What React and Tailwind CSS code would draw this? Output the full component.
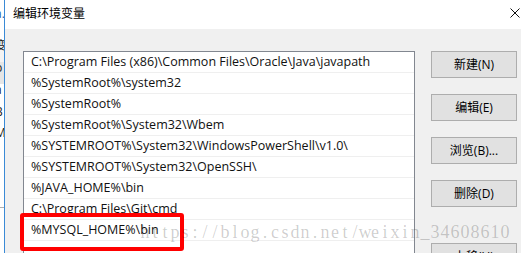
import React from "react";

const rows = [
  "C:\\Program Files (x86)\\Common Files\\Oracle\\Java\\javapath",
  "%SystemRoot%\\system32",
  "%SystemRoot%",
  "%SystemRoot%\\System32\\Wbem",
  "%SYSTEMROOT%\\System32\\WindowsPowerShell\\v1.0\\",
  "%SYSTEMROOT%\\System32\\OpenSSH\\",
  "%JAVA_HOME%\\bin",
  "C:\\Program Files\\Git\\cmd",
  "%MYSQL_HOME%\\bin",
  "",
];

const watermark = "https://blog.csdn.net/weixin_34608610";

function Btn({ children, className = "" }) {
  return (
    <div
      className={
        "w-[86px] h-[27px] shrink-0 flex items-center justify-center border border-[#adadad] bg-[#e1e1e1] text-[12px] text-black " +
        className
      }
    >
      {children}
    </div>
  );
}

export default function App() {
  return (
    <div
      className="relative w-[521px] h-[253px] overflow-hidden flex bg-white"
      style={{ fontFamily: '"Open Sans","Noto Sans CJK SC",sans-serif' }}
    >
      {/* background window sliver */}
      <div className="w-[4px] shrink-0 overflow-hidden bg-white flex flex-col">
        <div className="-ml-[5px] w-[12px] flex flex-col text-[12px] leading-none text-[#222]">
          <div className="h-[8px]" />
          <div className="h-[14px] text-[#2a5fa8]">a.</div>
          <div className="h-[18px]" />
          <div className="h-[22px] bg-[#f3f3f3]">变</div>
          <div className="h-[22px] bg-[#e5e5e5]">p</div>
          <div className="h-[22px]">a</div>
          <div className="h-[21px]">B</div>
          <div className="h-[80px]">M</div>
          <div className="h-px bg-[#b0b0b0]" />
        </div>
      </div>
      <div className="w-px shrink-0 bg-[#3a8ad6]" />

      {/* dialog */}
      <div className="flex-1 flex flex-col min-w-0">
        <div className="h-[29px] shrink-0 bg-white flex items-center justify-between pl-[8px] pr-[1px]">
          <span className="text-[12px] text-black leading-none mt-[-1px]">编辑环境变量</span>
          <svg width="10" height="10" viewBox="0 0 10 10" className="mt-[-3px]">
            <path d="M0.5 0.5 L9.5 9.5 M9.5 0.5 L0.5 9.5" stroke="#111" strokeWidth="1" fill="none" />
          </svg>
        </div>
        <div className="flex-1 bg-[#f0f0f0] flex pt-[22px] pl-[18px]">
          <div className="w-[392px] h-[230px] shrink-0 border border-[#828790] bg-white flex flex-col">
            {rows.map((r, i) => (
              <div
                key={i}
                className="h-[21px] shrink-0 border-b border-[#efefef] flex items-center pl-[7px] text-[12.5px] text-[#111] whitespace-nowrap"
              >
                {r}
              </div>
            ))}
          </div>
          <div className="ml-[16px] flex flex-col">
            <Btn>新建(N)</Btn>
            <Btn className="mt-[16px]">编辑(E)</Btn>
            <Btn className="mt-[16px]">浏览(B)...</Btn>
            <Btn className="mt-[16px]">删除(D)</Btn>
            <Btn className="mt-[36px]">上移(U)</Btn>
          </div>
        </div>
      </div>

      {/* red annotation box */}
      <div className="absolute left-[20px] top-[213px] w-[164px] h-[38px] border-4 border-[#ff0000] rounded-[3px]" />

      {/* watermark */}
      <div
        className="absolute left-[140px] top-[222px] flex text-[18px] leading-[20px] text-black/20 pointer-events-none"
        style={{ fontFamily: '"Liberation Serif",serif' }}
      >
        {watermark.split("").map((c, i) => (
          <span key={i} className="w-[10px] flex justify-center">
            {c}
          </span>
        ))}
      </div>
    </div>
  );
}
